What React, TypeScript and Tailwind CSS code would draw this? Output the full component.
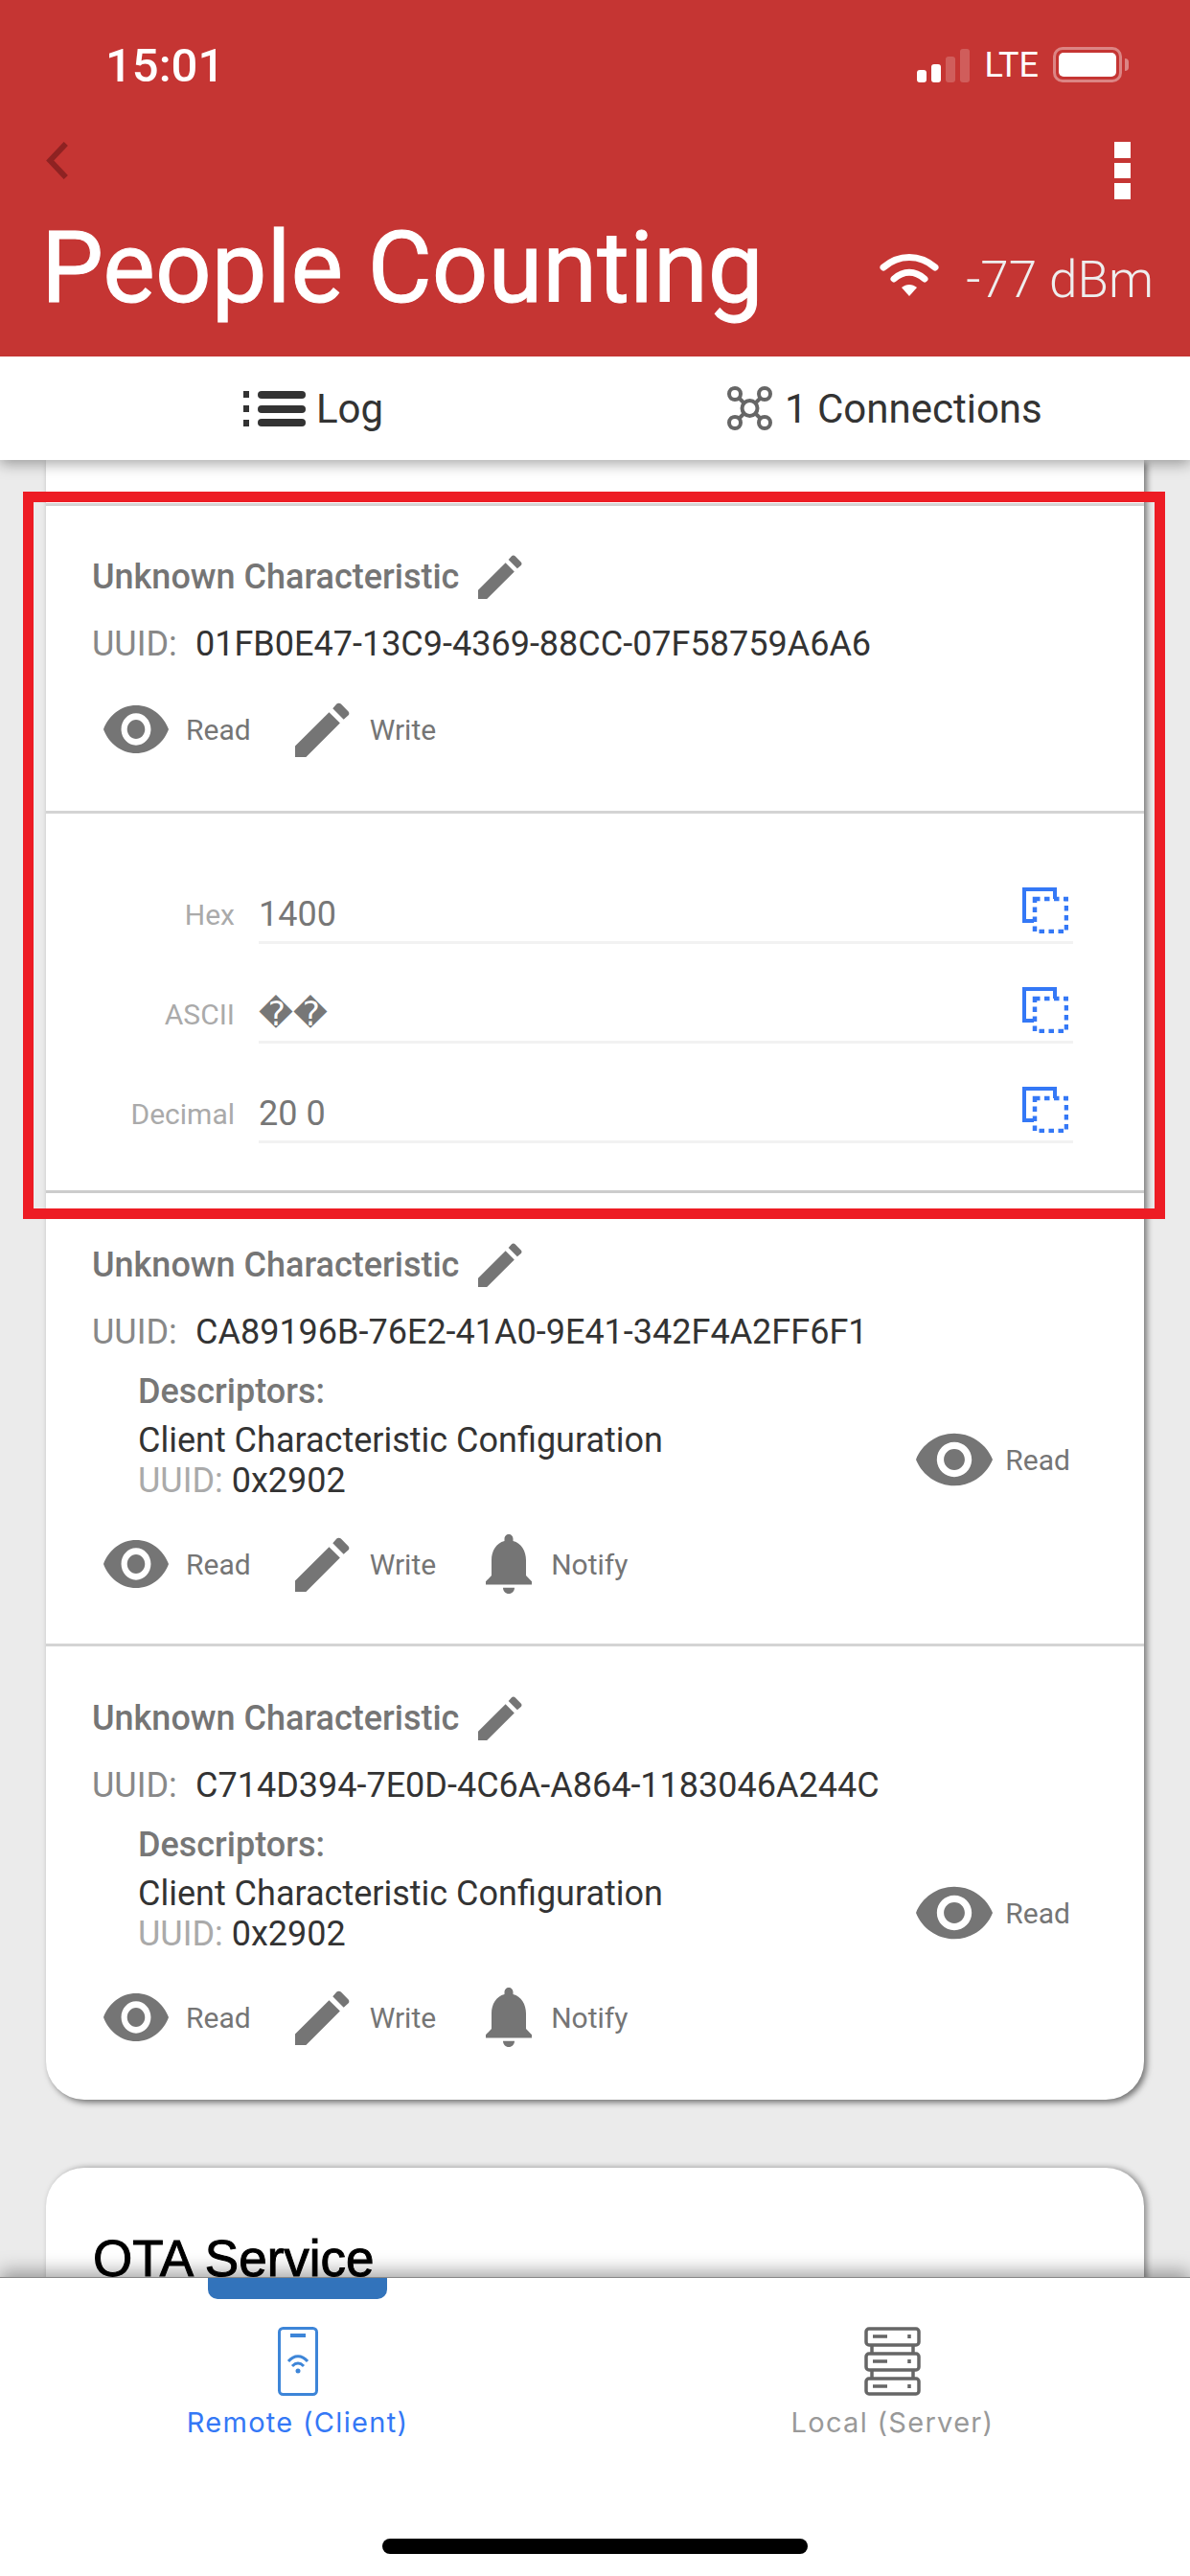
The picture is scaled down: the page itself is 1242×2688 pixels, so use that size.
import type { ReactNode } from "react";

const EYE =
  "M12 4.5C7 4.5 2.73 7.61 1 12c1.73 4.39 6 7.5 11 7.5s9.27-3.11 11-7.5c-1.73-4.39-6-7.5-11-7.5zM12 17c-2.76 0-5-2.24-5-5s2.24-5 5-5 5 2.24 5 5-2.24 5-5 5zm0-8c-1.66 0-3 1.34-3 3s1.34 3 3 3 3-1.34 3-3-1.34-3-3-3z";
const BELL =
  "M12 22c1.1 0 2-.9 2-2h-4c0 1.1.89 2 2 2zm6-6v-5c0-3.07-1.64-5.64-4.5-6.32V4c0-.83-.67-1.5-1.5-1.5s-1.5.67-1.5 1.5v.68C7.63 5.36 6 7.92 6 11v5l-2 2v1h16v-1l-2-2z";

function EyeIcon() {
  return (
    <svg viewBox="1 4.5 22 15" className="h-[50px] w-[68px] fill-[#757575]" preserveAspectRatio="none">
      <path d={EYE} />
    </svg>
  );
}

function PencilIcon({ size }: { size: string }) {
  return (
    <svg viewBox="3 3 18 18" className={size}>
      <path fill="#757575" d="M3 21v-3.6L14.2 6.2l3.6 3.6L6.6 21zM15.4 5l1.3-1.5c.4-.4 1-.4 1.4 0l2.4 2.4c.4.4.4 1 0 1.4L19 8.6z" />
    </svg>
  );
}

function BellIcon() {
  return (
    <svg viewBox="4 2.5 16 19.5" className="h-[62px] w-[48px] fill-[#757575]" preserveAspectRatio="none">
      <path d={BELL} />
    </svg>
  );
}

function CopyIcon() {
  return (
    <svg viewBox="0 0 48 48" className="h-[48px] w-[48px]" fill="none" stroke="#3478f6">
      <path d="M34 12V2H2v33h10" strokeWidth="4" />
      <rect x="13" y="12" width="33" height="34" strokeWidth="4.5" strokeDasharray="5.5 4.5" />
    </svg>
  );
}

function Action({ icon, label }: { icon: ReactNode; label: string }) {
  return (
    <div className="flex items-center">
      {icon}
      <span className="text-[30px] text-[#757575]">{label}</span>
    </div>
  );
}

function Actions({ notify }: { notify?: boolean }) {
  return (
    <div className="flex h-[60px] items-center pl-[60px]">
      <Action
        icon={
          <span className="mr-[18px]">
            <EyeIcon />
          </span>
        }
        label="Read"
      />
      <span className="ml-[46px] mr-[21px]">
        <PencilIcon size="h-[57px] w-[57px]" />
      </span>
      <span className="text-[30px] text-[#757575]">Write</span>
      {notify && (
        <>
          <span className="ml-[52px] mr-[20px]">
            <BellIcon />
          </span>
          <span className="text-[30px] text-[#757575]">Notify</span>
        </>
      )}
    </div>
  );
}

function TitleBlock({ uuid }: { uuid: string }) {
  return (
    <>
      <div className="flex h-[48px] items-center gap-[20px] pl-[48px]">
        <span className="text-[36px] font-medium text-[#757575]">Unknown Characteristic</span>
        <PencilIcon size="h-[46px] w-[46px]" />
      </div>
      <div className="mt-[22px] flex h-[48px] items-center pl-[48px] text-[36px]">
        <span className="w-[108px] text-[#888888]">UUID:</span>
        <span className="text-[#333333]">{uuid}</span>
      </div>
    </>
  );
}

function Descriptor() {
  return (
    <div className="mt-[15px] flex items-start pl-[96px] pr-[77px]">
      <div className="flex-1">
        <div className="h-[48px] text-[36px] font-medium leading-[46px] text-[#777777]">Descriptors:</div>
        <div className="mt-[3px] h-[46px] text-[36px] leading-[46px] text-[#333333]">
          Client Characteristic Configuration
        </div>
        <div className="h-[40px] text-[36px] leading-[38px] text-[#333333]">
          <span className="text-[#aaaaaa]">UUID:</span> 0x2902
        </div>
      </div>
      <div className="mt-[66px] flex items-center">
        <span className="mr-[13px]">
          <svg viewBox="1 4.5 22 15" className="h-[56px] w-[80px] fill-[#757575]">
            <path d={EYE} />
          </svg>
        </span>
        <span className="text-[30px] text-[#757575]">Read</span>
      </div>
    </div>
  );
}

function ValueRow({ label, value, symbol }: { label: string; value: string; symbol?: boolean }) {
  return (
    <div className="flex h-[104px] items-end">
      <div className="flex h-[60px] w-[197px] items-center justify-end pb-[2px] text-[30px] text-[#aaaaaa]">{label}</div>
      <div className="ml-[25px] flex h-[66px] w-[850px] items-start justify-between border-b-[3px] border-[#f2f2f2] pr-[5px] pt-[7px]">
        <span
          className={
            symbol
              ? "pt-[4px] font-['DejaVu_Sans',sans-serif] text-[35px] leading-[48px] text-[#777777]"
              : "pt-[4px] text-[36px] leading-[48px] text-[#777777]"
          }
        >
          {value}
        </span>
        <CopyIcon />
      </div>
    </div>
  );
}

function CharacteristicWithDescriptor({ uuid, last }: { uuid: string; last?: boolean }) {
  return (
    <div className={last ? "h-[473px] pt-[51px]" : "h-[473px] border-b-[3px] border-[#d4d4d4] pt-[51px]"}>
      <TitleBlock uuid={uuid} />
      <Descriptor />
      <div className="mt-[36px]">
        <Actions notify />
      </div>
    </div>
  );
}

export default function App() {
  return (
    <div className="relative flex h-[2688px] w-[1242px] flex-col overflow-hidden bg-[#ebebeb] font-['Roboto',sans-serif]">
      <header className="relative z-20 h-[372px] shrink-0 bg-[#c53533] text-white">
        <div className="flex h-[135px] items-start justify-between pl-[110px] pr-[64px] pt-[49px]">
          <span className="text-[49px] font-medium leading-[40px]">15:01</span>
          <div className="flex items-center">
            <div className="flex items-end gap-[5px] pt-[1px]">
              <span className="h-[13px] w-[10px] rounded-[3px] bg-white" />
              <span className="h-[19px] w-[10px] rounded-[3px] bg-white" />
              <span className="h-[27px] w-[10px] rounded-[3px] bg-white/20" />
              <span className="h-[35px] w-[10px] rounded-[3px] bg-white/20" />
            </div>
            <span className="ml-[16px] text-[36px] leading-[36px]">LTE</span>
            <div className="ml-[15px] flex h-[37px] w-[72px] items-center rounded-[10px] border-[3px] border-white/40 p-[3px]">
              <span className="h-full w-full rounded-[5px] bg-white" />
            </div>
            <span className="ml-[3px] h-[13px] w-[4px] rounded-r-[4px] bg-white/40" />
          </div>
        </div>
        <div className="flex h-[80px] items-start justify-between pl-[48px] pr-[62px] pt-[13px]">
          <svg viewBox="0 0 24 40" className="h-[39px] w-[24px]" fill="none" stroke="#8e2222" strokeWidth="6">
            <path d="M21 2 4 20l17 18" />
          </svg>
          <div className="flex flex-col gap-[5px]">
            <span className="h-[17px] w-[17px] bg-white" />
            <span className="h-[16px] w-[17px] bg-white" />
            <span className="h-[17px] w-[17px] bg-white" />
          </div>
        </div>
        <div className="flex h-[157px] items-start justify-between pl-[43px] pr-[38px] pt-[15px]">
          <span className="text-[103px] leading-[100px] [-webkit-text-stroke:1px_white]">People Counting</span>
          <div className="flex items-center pt-[18px]">
            <svg viewBox="0 0 62 47" className="-ml-[4px] h-[47px] w-[62px]">
              <path d="M4 17C20 3 42 3 58 17" fill="none" stroke="white" strokeWidth="7" strokeLinecap="round" />
              <path d="M15 29C25 20 37 20 47 29" fill="none" stroke="white" strokeWidth="7" strokeLinecap="round" />
              <path d="M23 38c5-4 11-4 16 0l-8 9z" fill="white" />
            </svg>
            <span className="ml-[28px] pt-[14px] text-[53px] font-light leading-[60px] text-[#eeeeee]">-77 dBm</span>
          </div>
        </div>
      </header>

      <nav className="relative z-10 grid h-[108px] shrink-0 grid-cols-2 bg-white text-[42px] text-[#333333] shadow-[0_4px_14px_rgba(0,0,0,0.35)]">
        <div className="flex items-center pl-[254px]">
          <svg viewBox="0 0 65 37" className="mr-[11px] h-[37px] w-[65px] fill-[#333333]">
            <rect x="0" y="0" width="6" height="7" />
            <rect x="0" y="15" width="6" height="7" />
            <rect x="0" y="30" width="6" height="7" />
            <rect x="15" y="0" width="50" height="8" rx="4" />
            <rect x="15" y="15" width="50" height="8" rx="4" />
            <rect x="15" y="29" width="50" height="8" rx="4" />
          </svg>
          <span>Log</span>
        </div>
        <div className="flex items-center pl-[138px]">
          <svg viewBox="0 0 47 46" className="mr-[13px] h-[46px] w-[47px]" fill="none" stroke="#666666" strokeWidth="4">
            <circle cx="8" cy="8" r="6" />
            <circle cx="39" cy="8" r="6" />
            <circle cx="8" cy="38" r="6" />
            <circle cx="39" cy="38" r="6" />
            <circle cx="23.5" cy="23" r="8" />
            <path d="M12 12l6 6M35 12l-6 6M12 34l6-6M35 34l-6-6" />
          </svg>
          <span>1 Connections</span>
        </div>
      </nav>

      <main className="min-h-0 flex-1 overflow-hidden px-[48px]">
        <section className="rounded-b-[40px] bg-white shadow-[3px_3px_6px_rgba(0,0,0,0.5)]">
          <div className="h-[48px] border-b-[3px] border-[#d4d4d4]" />
          <div className="h-[321px] border-b-[3px] border-[#d4d4d4] pt-[50px]">
            <TitleBlock uuid="01FB0E47-13C9-4369-88CC-07F58759A6A6" />
            <div className="mt-[35px]">
              <Actions />
            </div>
          </div>
          <div className="h-[396px] border-b-[3px] border-[#cccccc] pt-[32px]">
            <ValueRow label="Hex" value="1400" />
            <ValueRow label="ASCII" value="��" symbol />
            <ValueRow label="Decimal" value="20 0" />
          </div>
          <CharacteristicWithDescriptor uuid="CA89196B-76E2-41A0-9E41-342F4A2FF6F1" />
          <CharacteristicWithDescriptor uuid="C714D394-7E0D-4C6A-A864-1183046A244C" last />
        </section>
        <section className="mt-[71px] h-[300px] rounded-t-[40px] bg-white px-[49px] pt-[66px] shadow-[3px_0_6px_rgba(0,0,0,0.4)]">
          <h2 className="font-['Liberation_Sans',sans-serif] text-[53px] leading-[58px] text-black [-webkit-text-stroke:1px_black]">
            OTA Service
          </h2>
        </section>
      </main>

      <footer className="relative z-10 grid h-[312px] shrink-0 grid-cols-2 border-t border-[#888888] bg-white shadow-[0_-6px_18px_rgba(0,0,0,0.35)]">
        <span className="absolute left-[217px] top-0 h-[22px] w-[187px] rounded-b-[10px] bg-[#3273bb]" />
        <div className="flex flex-col items-center pt-[51px]">
          <svg viewBox="0 0 42 72" className="h-[72px] w-[42px]" fill="none" stroke="#3d85d8">
            <rect x="1.5" y="1.5" width="39" height="69" rx="4" strokeWidth="3" />
            <path d="M13 9h16" strokeWidth="4" />
            <path d="M11 36c6-7 14-7 20 0M15 41c4-4 8-4 12 0" strokeWidth="3" />
            <circle cx="21" cy="46" r="2.5" fill="#3d85d8" stroke="none" />
          </svg>
          <span className="mt-[9px] font-['Inter',sans-serif] text-[29px] leading-[38px] tracking-[1.3px] text-[#3478f6]">
            Remote (Client)
          </span>
        </div>
        <div className="flex flex-col items-center pt-[51px]">
          <svg viewBox="0 0 59 72" className="h-[72px] w-[59px]" fill="none" stroke="#666666" strokeWidth="3.5">
            <rect x="2" y="2" width="55" height="17" rx="3" />
            <rect x="2" y="28" width="55" height="17" rx="3" />
            <rect x="2" y="54" width="55" height="16" rx="3" />
            <path d="M8 19v9M51 19v9M8 45v9M51 45v9" />
            <path d="M9 10h15M9 36h15M9 62h15M47 8v4M47 34v4M47 60v4" />
          </svg>
          <span className="mt-[9px] font-['Inter',sans-serif] text-[29px] leading-[38px] tracking-[1.3px] text-[#999999]">
            Local (Server)
          </span>
        </div>
        <span className="absolute left-[399px] top-[272px] h-[16px] w-[444px] rounded-full bg-black" />
      </footer>

      <div className="pointer-events-none absolute left-[24px] top-[513px] z-30 h-[759px] w-[1192px] border-[11px] border-[#ed1c24]" />
    </div>
  );
}
